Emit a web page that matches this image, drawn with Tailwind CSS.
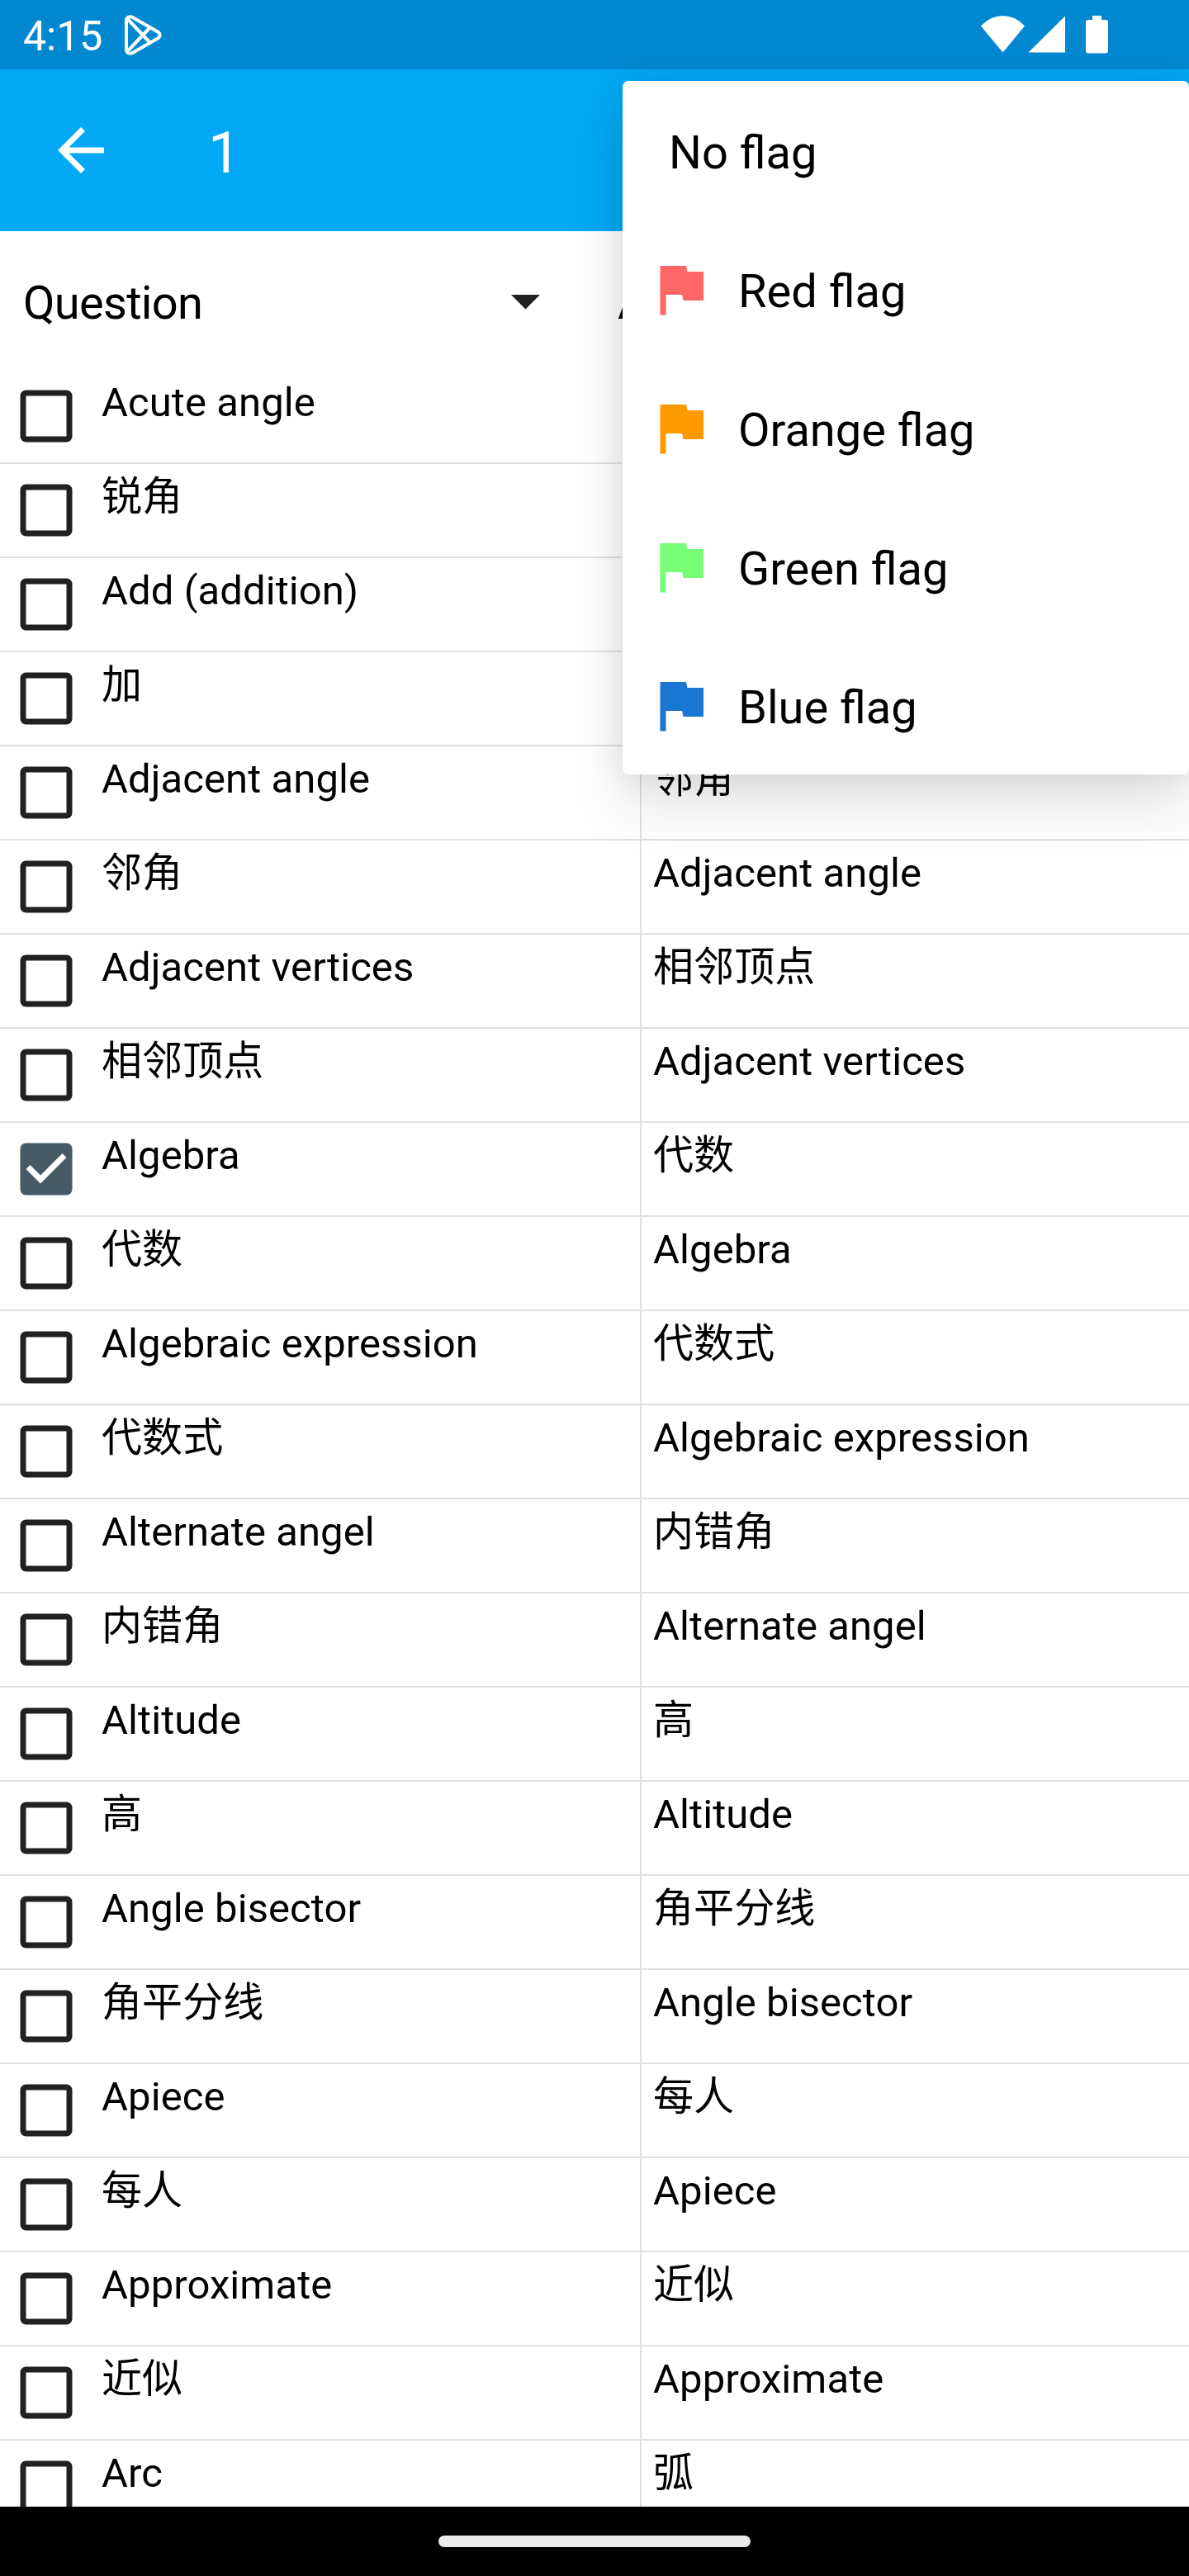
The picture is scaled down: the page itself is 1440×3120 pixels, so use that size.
<!DOCTYPE html>
<html lang="en">
<head>
<meta charset="utf-8">
<title>Card browser</title>
<script src="https://cdn.jsdelivr.net/npm/@tailwindcss/browser@4"></script>
</head>
<body class="bg-white">
<div class="relative flex h-[3120px] w-[1440px] flex-col overflow-hidden bg-white font-['Roboto','Noto_Sans_CJK_SC',sans-serif] text-black">

  <!-- Status bar -->
  <header class="flex h-[84px] shrink-0 items-start bg-[#0288d1] text-white">
    <span class="ml-7 mt-[15px] w-[123px] text-[50px] leading-[58px]">4:15</span>
    <svg class="mt-[18px] h-[49px] w-[45px]" viewBox="0 0 45 49" fill="none" stroke="#fff" stroke-width="4" stroke-linejoin="round">
      <path d="M2 7v35c0 4 4 6 7.500 4L40 28.500c3.500-2 3.500-6 0-8L9.500 3C6 1 2 3 2 7z"/>
      <path d="M3.500 5L31 34M3.500 44L31 15"/>
    </svg>
    <div class="ml-auto mr-[98px] mt-[19px] flex">
      <svg class="h-[46px] w-[154px]" viewBox="0 0 154 46" fill="#fff">
        <path d="M0 12.500C15-4 38-4 53 12.500L26.500 44.500z"/>
        <path d="M102 .5V44.500H57.500z"/>
        <path d="M135 0h11v5h5a3 3 0 0 1 3 3v34.500a3 3 0 0 1-3 3h-21a3 3 0 0 1-3-3V8a3 3 0 0 1 3-3h5z"/>
      </svg>
    </div>
  </header>

  <!-- Action bar -->
  <nav class="flex h-[196px] shrink-0 items-center bg-[#03a9f4] text-white">
    <svg class="ml-14 size-[84px]" viewBox="0 0 24 24" fill="#fff"><path d="M20 11H7.830l5.590-5.590L12 4l-8 8 8 8 1.410-1.410L7.830 13H20v-2z"/></svg>
    <span class="ml-[112px] mt-[6px] text-[70px] leading-[82px]">1</span>
  </nav>

  <!-- Column selectors -->
  <div class="flex h-[168px] shrink-0 items-center text-[56px] leading-[66px]">
    <div class="flex w-[720px] items-center justify-between pl-7 pr-[66px]">
      <span class="mt-[6px] tracking-[-0.7px]">Question</span>
      <svg class="mt-[3px] h-[18px] w-[35px]" viewBox="0 0 35 18" fill="#212121"><path d="M0 0h35L17.500 17.500z"/></svg>
    </div>
    <span class="ml-7 mt-[6px] tracking-[-0.7px]">Answer</span>
  </div>

  <!-- Cards -->
  <main id="cards" class="min-h-0 flex-1 overflow-hidden text-[49px] leading-[50px] tracking-[0.08px]"></main>

  <!-- Gesture bar -->
  <footer class="flex h-[84px] shrink-0 items-center justify-center bg-black">
    <div class="h-[14px] w-[378px] rounded-full bg-[#ebebeb]"></div>
  </footer>

  <!-- Flag menu -->
  <div id="menu" class="absolute left-[754px] top-[98px] w-[686px] rounded-[7px] bg-white text-[56px] leading-[66px] shadow-[0_42px_68px_rgba(0,0,0,0.1),0_0_44px_rgba(0,0,0,0.1)]">
    <div class="flex h-[168px] items-center pl-14"><span class="mt-[6px]">No flag</span></div>
  </div>
</div>

<script>
  const terms = [
    ['Acute angle', '锐角'], ['Add (addition)', '加'], ['Adjacent angle', '邻角'],
    ['Adjacent vertices', '相邻顶点'], ['Algebra', '代数'], ['Algebraic expression', '代数式'],
    ['Alternate angel', '内错角'], ['Altitude', '高'], ['Angle bisector', '角平分线'],
    ['Apiece', '每人'], ['Approximate', '近似'], ['Arc', '弧']
  ];
  const box = '<svg class="ml-[14px] mt-[14px] size-[84px] shrink-0" viewBox="0 0 24 24"><rect x="4" y="4" width="16" height="16" rx="1" fill="none" stroke="#212121" stroke-width="2"/></svg>';
  const boxChecked = '<svg class="ml-[14px] mt-[14px] size-[84px] shrink-0" viewBox="0 0 24 24" fill="#455a64"><rect x="3" y="3" width="18" height="18" rx="2"/><path fill="#fff" d="M10 17l-5-5 1.410-1.410L10 14.170l7.590-7.590L19 8z"/></svg>';
  const row = (q, a) => `<div class="flex h-[114px] items-start border-b-2 border-[#e0e0e0]">
    ${q === 'Algebra' ? boxChecked : box}
    <span class="ml-[25px] w-[652px] pt-[15px] whitespace-nowrap">${q}</span>
    <span class="h-[112px] flex-1 border-l-2 border-[#e0e0e0] pl-[14px] pt-[15px] whitespace-nowrap">${a}</span>
  </div>`;
  // The last card is only listed front first: it is cut by the gesture bar.
  document.getElementById('cards').innerHTML = terms.map(([en, zh], i) =>
    row(en, zh) + (i < terms.length - 1 ? row(zh, en) : '')).join('');

  const flags = [['Red flag', '#ff6666'], ['Orange flag', '#ff9900'], ['Green flag', '#77ff77'], ['Blue flag', '#1976d2']];
  document.getElementById('menu').insertAdjacentHTML('beforeend', flags.map(([name, color]) => `
    <div class="flex h-[168px] items-center pl-7">
      <svg class="size-[84px]" viewBox="0 0 24 24" fill="${color}"><path d="M14.400 6L14 4H5v17h2v-7h5.600l.4 2h7V6z"/></svg>
      <span class="ml-7 mt-[6px]">${name}</span>
    </div>`).join(''));
</script>
</body>
</html>
